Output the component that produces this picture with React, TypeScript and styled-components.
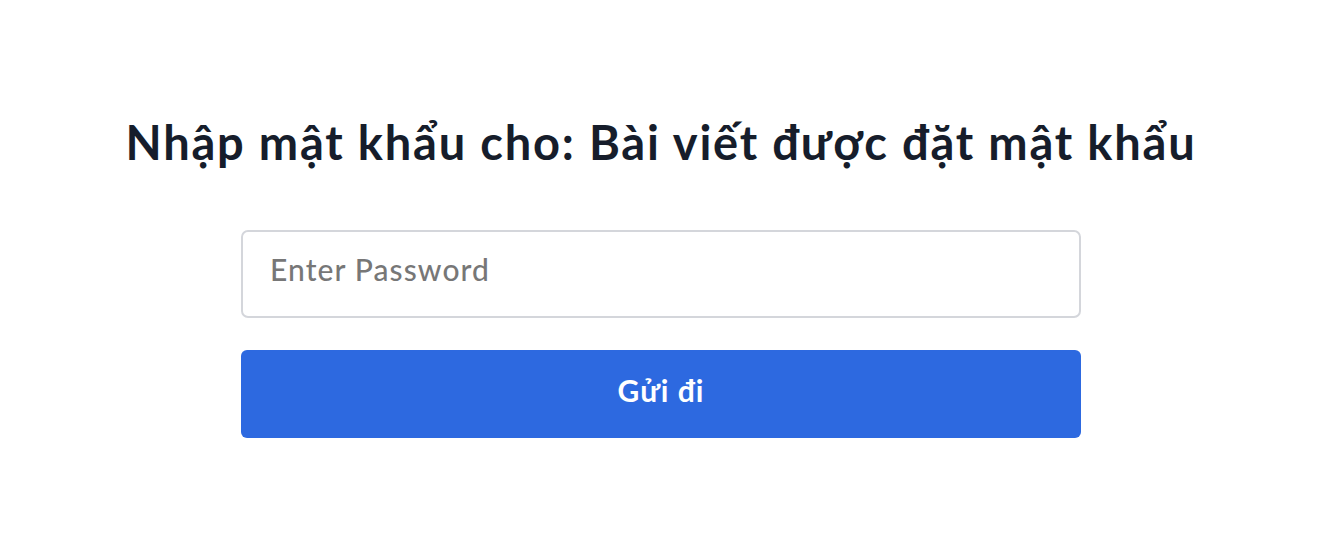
import React, { useState } from "react";
import styled, { createGlobalStyle } from "styled-components";

const GlobalStyle = createGlobalStyle`
  html, body {
    margin: 0;
    padding: 0;
    background: #ffffff;
  }
  body {
    font-family: Lato, "Noto Sans", "Liberation Sans", sans-serif;
  }
`;

const Page = styled.main`
  display: flex;
  flex-direction: column;
  align-items: center;
  padding-top: 111px;
`;

const Title = styled.h1`
  margin: 0 0 57px;
  font-size: 47px;
  line-height: 62px;
  font-weight: 700;
  letter-spacing: 1.8px;
  color: #161d2b;
  text-align: center;
`;

const Form = styled.form`
  width: 840px;
  display: flex;
  flex-direction: column;
  gap: 32px;
`;

const PasswordInput = styled.input`
  box-sizing: border-box;
  height: 88px;
  width: 100%;
  padding: 0 27px 10px;
  border: 2px solid #d4d6db;
  border-radius: 7px;
  font-family: inherit;
  font-size: 30px;
  font-weight: 500;
  letter-spacing: 1.1px;
  color: #333;
  outline: 0;

  &::placeholder {
    color: #777777;
  }
`;

const SubmitButton = styled.button`
  box-sizing: border-box;
  height: 88px;
  width: 100%;
  padding: 0 0 9px;
  border: 0;
  border-radius: 6px;
  background: #2d69e0;
  color: #ffffff;
  font-family: inherit;
  font-size: 30px;
  font-weight: 700;
  letter-spacing: 1px;
  cursor: pointer;
`;

export default function App() {
  const [password, setPassword] = useState("");

  return (
    <>
      <GlobalStyle />
      <Page>
        <Title>Nhập mật khẩu cho: Bài viết được đặt mật khẩu</Title>
        <Form onSubmit={(event) => event.preventDefault()}>
          <PasswordInput
            type="password"
            value={password}
            onChange={(event) => setPassword(event.target.value)}
            placeholder="Enter Password"
          />
          <SubmitButton type="submit">Gửi đi</SubmitButton>
        </Form>
      </Page>
    </>
  );
}
